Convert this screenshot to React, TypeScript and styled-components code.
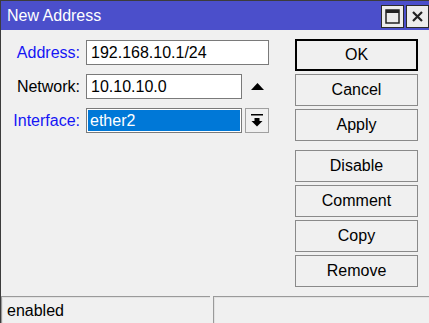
import React from 'react';
import styled, { createGlobalStyle } from 'styled-components';

const GlobalStyle = createGlobalStyle`
    html, body {
        margin:0;
        padding:0;
        width:100%;
        height:100%;
        overflow:hidden;
        background:#f0f0f0;
    }
    #root {
        height:100%;
    }
`;

const Window = styled.div`
    width:429px;
    height:323px;
    display:flex;
    flex-direction:column;
    box-sizing:border-box;
    border-left:1px solid #3c3c3c;
    border-top:1px solid #3c3c3c;
    font-family:"Liberation Sans", Arial, sans-serif;
    font-size:16px;
    color:#000;
    background:#f0f0f0;
`;

const TitleBar = styled.div`
    height:29px;
    flex:none;
    display:flex;
    align-items:center;
    justify-content:space-between;
    background:#4b4fcb;
    color:#fff;
    padding-left:6px;
    font-size:16px;
`;

const TitleButtons = styled.div`
    display:flex;
    gap:2px;
    align-self:flex-start;
    margin-top:4px;
`;

const TitleButton = styled.button`
    width:23px;
    height:23px;
    padding:0;
    margin:0;
    box-sizing:border-box;
    border:1px solid #2b2b2b;
    background:#ececec;
    display:flex;
    align-items:center;
    justify-content:center;
`;

const Body = styled.div`
    flex:1;
    display:flex;
    padding-top:9px;
`;

const Form = styled.div`
    width:294px;
    display:grid;
    grid-template-columns:82px 156px 24px;
    column-gap:3px;
    row-gap:9px;
    grid-auto-rows:25px;
    padding-top:1px;
    align-content:start;
`;

const Label = styled.label<{ $blue?: boolean }>`
    text-align:right;
    align-self:center;
    padding-right:3px;
    color: ${(props) => (props.$blue ? '#1515f5' : '#000')};
`;

const Field = styled.div<{ $wide?: boolean }>`
    grid-column: ${(props) => (props.$wide ? 'span 2' : 'auto')};
    box-sizing:border-box;
    height:25px;
    border:1px solid #7a7a7a;
    background:#fff;
    padding:0 4px;
    display:flex;
    align-items:center;
`;

const SelectField = styled.div`
    box-sizing:border-box;
    height:25px;
    border:1px solid #7a7a7a;
    background:#fff;
    padding:1px;
    display:flex;
`;

const Selected = styled.div`
    flex:1;
    background:#0078d7;
    color:#fff;
    padding-left:2px;
    display:flex;
    align-items:center;
`;

const IconCell = styled.div<{ $boxed?: boolean }>`
    box-sizing:border-box;
    height:25px;
    width:24px;
    display:flex;
    align-items:center;
    justify-content:center;
    border: ${(props) => (props.$boxed ? '1px solid #a0a0a0' : 'none')};
    background: ${(props) => (props.$boxed ? '#f0f0f0' : 'transparent')};
`;

const Buttons = styled.div`
    display:flex;
    flex-direction:column;
    gap:3px;
    padding-top:0;
    width:123px;
`;

const Gap = styled.div`
    height:3px;
`;

const Button = styled.button<{ $default?: boolean }>`
    box-sizing:border-box;
    height:32px;
    width:123px;
    margin:0;
    padding:0;
    font-family:inherit;
    font-size:16px;
    color:#000;
    background:#f0f0f0;
    border:1px solid ${(props) => (props.$default ? '#000' : '#8a8a8a')};
    box-shadow: ${(props) => (props.$default ? 'inset 0 0 0 1px #000' : 'none')};
`;

const StatusBar = styled.div`
    height:27px;
    flex:none;
    display:flex;
    gap:3px;
`;

const StatusPanel = styled.div<{ $grow?: boolean }>`
    box-sizing:border-box;
    width: ${(props) => (props.$grow ? 'auto' : '209px')};
    flex: ${(props) => (props.$grow ? '1' : 'none')};
    border-top:1px solid #9a9a9a;
    border-left:1px solid #9a9a9a;
    box-shadow: inset 1px 1px 0 #e2e2e2;
    padding:5px 0 0 5px;
    line-height:18px;
`;

const MaxIcon = () => (
    <svg width="15" height="15" viewBox="0 0 15 15">
        <rect x="1" y="1" width="13" height="13" fill="none" stroke="#222" strokeWidth="1.5" />
        <rect x="1" y="1" width="13" height="3" fill="#222" />
    </svg>
);

const CloseIcon = () => (
    <svg width="13" height="13" viewBox="0 0 13 13">
        <path d="M2 2 L11 11 M11 2 L2 11" stroke="#222" strokeWidth="2.2" />
    </svg>
);

const UpIcon = () => (
    <svg width="13" height="7" viewBox="0 0 13 7">
        <polygon points="6.5,0 13,7 0,7" fill="#000" />
    </svg>
);

const DropIcon = () => (
    <svg width="12" height="13" viewBox="0 0 12 13">
        <rect x="0" y="0" width="12" height="1.5" fill="#000" />
        <rect x="3.5" y="4" width="5" height="3" fill="#000" />
        <polygon points="0.5,7 11.5,7 6,12.5" fill="#000" />
    </svg>
);

const App = () => {
    return (
        <Window>
            <GlobalStyle />
            <TitleBar>
                <span>New Address</span>
                <TitleButtons>
                    <TitleButton><MaxIcon /></TitleButton>
                    <TitleButton><CloseIcon /></TitleButton>
                </TitleButtons>
            </TitleBar>
            <Body>
                <Form>
                    <Label $blue>Address:</Label>
                    <Field $wide>192.168.10.1/24</Field>
                    <Label>Network:</Label>
                    <Field>10.10.10.0</Field>
                    <IconCell><UpIcon /></IconCell>
                    <Label $blue>Interface:</Label>
                    <SelectField><Selected>ether2</Selected></SelectField>
                    <IconCell $boxed><DropIcon /></IconCell>
                </Form>
                <Buttons>
                    <Button $default>OK</Button>
                    <Button>Cancel</Button>
                    <Button>Apply</Button>
                    <Gap />
                    <Button>Disable</Button>
                    <Button>Comment</Button>
                    <Button>Copy</Button>
                    <Button>Remove</Button>
                </Buttons>
            </Body>
            <StatusBar>
                <StatusPanel>enabled</StatusPanel>
                <StatusPanel $grow />
            </StatusBar>
        </Window>
    );
};

export default App;
